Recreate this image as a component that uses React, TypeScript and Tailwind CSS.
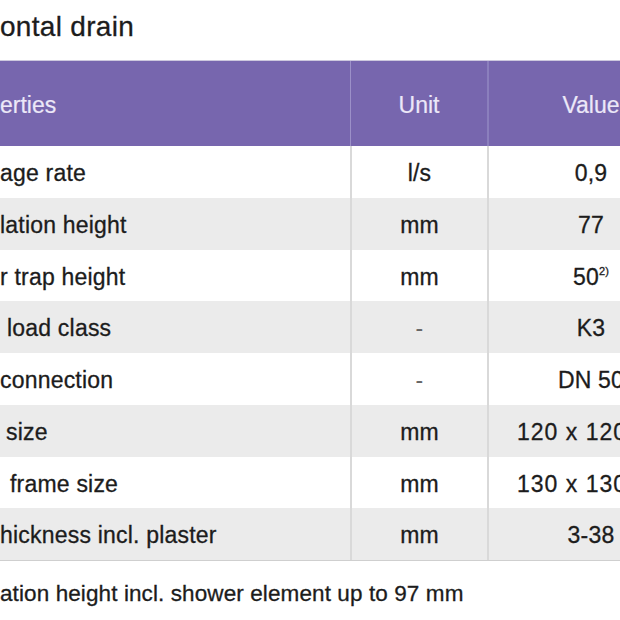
const rows: { prop: string; indent?: string; unit: string; value: React.ReactNode; left?: boolean }[] = [
  { prop: "age rate", unit: "l/s", value: "0,9" },
  { prop: "lation height", unit: "mm", value: "77" },
  { prop: "r trap height", unit: "mm", value: <>50<sup className="text-[11px] align-[9px]">2)</sup></> },
  { prop: "load class", indent: "pl-[7px]", unit: "-", value: "K3" },
  { prop: "connection", unit: "-", value: "DN 50" },
  { prop: "size", indent: "pl-[6px]", unit: "mm", value: "120 x 120", left: true },
  { prop: "frame size", indent: "pl-[10px]", unit: "mm", value: "130 x 130", left: true },
  { prop: "hickness incl. plaster", unit: "mm", value: "3-38" },
];

export default function App() {
  return (
    <div className="w-[620px] h-[620px] overflow-hidden bg-white font-['Liberation_Sans',Arial,sans-serif] text-[#1c1c1c] [-webkit-text-stroke:0.3px_#1c1c1c]">
      <div className="w-[700px]">
        <h1 className="mt-[13px] text-[28px] leading-[28px] font-normal tracking-[0.3px]">ontal drain</h1>

        <div className="mt-[19px] border-t border-[#cdc8de]">
          <div className="grid grid-cols-[350px_137px_206px] h-[85px] bg-[#7766ae] text-[23px] text-[#ece8f8] [-webkit-text-stroke:0.2px_#ece8f8]">
            <div className="flex items-center pt-[3px]">erties</div>
            <div className="flex items-center justify-center pt-[3px] border-l border-[#9c90c8]">Unit</div>
            <div className="flex items-center justify-center pt-[3px] border-l-2 border-[#8b7fbd]">Value</div>
          </div>

          {rows.map((r, i) => (
            <div
              key={r.prop}
              className={`grid grid-cols-[350px_137px_206px] h-[51.75px] pt-[3px] text-[23px] tracking-[0.2px] ${
                i % 2 === 1 ? "bg-[#ebebeb]" : "bg-white"
              }`}
            >
              <div className={`flex items-center whitespace-nowrap ${r.indent ?? ""}`}>{r.prop}</div>
              <div className="flex items-center justify-center border-l-2 border-[#d9d9d9] -mt-[3px]">
                <span className={`pt-[3px] ${r.unit === "-" ? "text-[#666] [-webkit-text-stroke:0px]" : ""}`}>{r.unit}</span>
              </div>
              <div
                className={`flex items-center whitespace-nowrap border-l-2 border-[#d9d9d9] -mt-[3px] pt-[3px] ${
                  r.left ? "pl-[28px] tracking-[1px]" : "justify-center"
                }`}
              >
                {r.value}
              </div>
            </div>
          ))}
          <div className="h-px bg-[#cfcfcf]" />
        </div>

        <p className="mt-[21px] text-[22.5px] leading-[23px] tracking-[0.1px]">
          ation height incl. shower element up to 97 mm
        </p>
      </div>
    </div>
  );
}
